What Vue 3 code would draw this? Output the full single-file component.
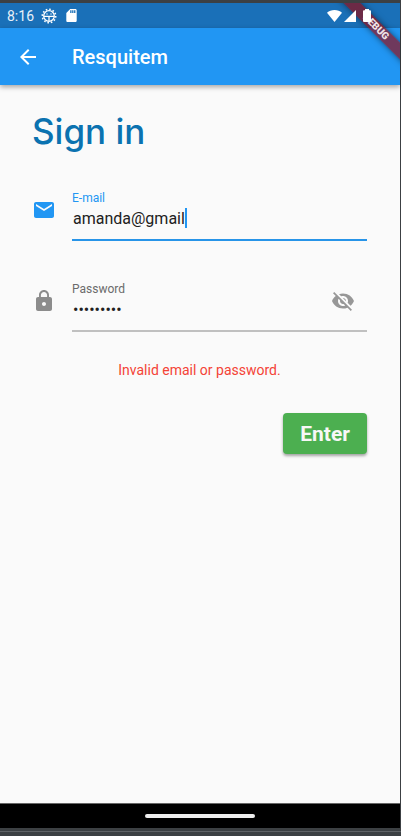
<script setup>
import { ref } from 'vue'

const email = ref('amanda@gmail')
const password = ref('password1')
const hidden = ref(true)
const error = ref('Invalid email or password.')
</script>

<template>
  <div class="device">
    <div class="screen">
      <div class="status">
        <span class="clock">8:16</span>
        <svg class="bug" viewBox="0 0 16 16" aria-hidden="true">
          <circle cx="8" cy="8" r="6.7" fill="none" stroke="#fff" stroke-width="1.6" stroke-dasharray="1.6 1.908" />
          <circle cx="8" cy="8" r="5.3" fill="none" stroke="#fff" stroke-width="1.3" />
          <path d="M3 8.300h10M8 8.300V13" stroke="#fff" stroke-width="1.3" />
          <circle cx="6" cy="6" r=".7" fill="#fff" />
          <circle cx="10" cy="6" r=".7" fill="#fff" />
        </svg>
        <svg class="sd" viewBox="4 2 16 20" aria-hidden="true">
          <path fill="#fff" d="M18 2h-8L4.020 8 4 20c0 1.100.9 2 2 2h12c1.100 0 2-.9 2-2V4c0-1.100-.9-2-2-2zm-6 6h-2V4h2v4zm3 0h-2V4h2v4zm3 0h-2V4h2v4z" />
        </svg>
        <span class="fill"></span>
        <svg class="wifi" viewBox="0 0 15 12" aria-hidden="true">
          <path fill="#fff" d="M7.500 12L0 2.700C2 1 4.600 0 7.500 0S13 1 15 2.700z" />
        </svg>
        <svg class="cell" viewBox="0 0 12 12" aria-hidden="true">
          <path fill="#fff" d="M0 12L12 0v12z" />
        </svg>
        <svg class="battery" viewBox="0 0 8 13" aria-hidden="true">
          <path fill="#fff" d="M2 0h4v1.300h1q1 0 1 1V12q0 1-1 1H1q-1 0-1-1V2.300q0-1 1-1h1z" />
        </svg>
      </div>

      <header class="appbar">
        <button class="back" type="button" aria-label="Back">
          <svg viewBox="0 0 24 24"><path fill="#fff" d="M20 11H7.830l5.590-5.590L12 4l-8 8 8 8 1.410-1.410L7.830 13H20v-2z" /></svg>
        </button>
        <h1 class="title">Resquitem</h1>
      </header>

      <div class="banner-clip"><div class="banner">DEBUG</div></div>

      <main class="content">
        <h2 class="heading">Sign in</h2>
        <form @submit.prevent>
          <div class="row">
            <svg class="icon mail" viewBox="0 0 24 24" aria-hidden="true">
              <path fill="currentColor" d="M20 4H4c-1.100 0-1.990.9-1.990 2L2 18c0 1.100.9 2 2 2h16c1.100 0 2-.9 2-2V6c0-1.100-.9-2-2-2zm0 4l-8 5-8-5V6l8 5 8-5v2z" />
            </svg>
            <div class="field active">
              <label for="email">E-mail</label>
              <div class="value">
                <span class="sizer">
                  <span class="ghost" aria-hidden="true">{{ email }}</span>
                  <input id="email" v-model="email" type="text" inputmode="email" autocomplete="off" spellcheck="false" size="1" />
                </span>
                <span class="caret"></span>
              </div>
            </div>
          </div>

          <div class="row">
            <svg class="icon" viewBox="0 0 24 24" aria-hidden="true">
              <path fill="currentColor" d="M18 8h-1V6c0-2.760-2.240-5-5-5S7 3.240 7 6v2H6c-1.100 0-2 .9-2 2v10c0 1.100.9 2 2 2h12c1.100 0 2-.9 2-2V10c0-1.100-.9-2-2-2zm-6 9c-1.100 0-2-.9-2-2s.9-2 2-2 2 .9 2 2-.9 2-2 2zm3.100-9H8.900V6c0-1.710 1.390-3.100 3.100-3.100 1.710 0 3.100 1.390 3.100 3.100v2z" />
            </svg>
            <div class="field secret">
              <div class="stack">
                <label for="password">Password</label>
                <div class="value">
                  <input id="password" v-model="password" :type="hidden ? 'password' : 'text'" autocomplete="off" />
                </div>
              </div>
              <button class="eye" type="button" aria-label="Toggle password visibility" @click="hidden = !hidden">
                <svg viewBox="0 0 24 24"><path fill="currentColor" d="M12 7c2.760 0 5 2.240 5 5 0 .65-.13 1.260-.36 1.830l2.920 2.920c1.510-1.260 2.700-2.890 3.430-4.750-1.730-4.390-6-7.500-11-7.500-1.400 0-2.740.25-3.980.7l2.160 2.160C10.740 7.130 11.350 7 12 7zM2 4.270l2.280 2.280.46.46C3.080 8.300 1.780 10.020 1 12c1.730 4.390 6 7.500 11 7.500 1.550 0 3.030-.3 4.380-.84l.42.42L19.730 22 21 20.730 3.270 3 2 4.270zM7.530 9.800l1.550 1.550c-.05.21-.08.43-.08.65 0 1.660 1.340 3 3 3 .22 0 .44-.03.65-.08l1.550 1.550c-.67.33-1.410.53-2.200.53-2.760 0-5-2.240-5-5 0-.79.2-1.530.53-2.200zm4.310-.78l3.150 3.150.02-.16c0-1.660-1.340-3-3-3l-.17.01z" /></svg>
              </button>
            </div>
          </div>

          <p class="error" role="alert">{{ error }}</p>
          <div class="actions"><button class="enter" type="submit">Enter</button></div>
        </form>
      </main>

      <div class="navbar"><span class="pill"></span></div>
    </div>
  </div>
</template>

<style>
body { margin: 0; background: #3c4043; }
</style>

<style scoped>
* { box-sizing: border-box; }
.device {
  min-height: 100vh;
  display: flex;
  flex-direction: column;
  padding: 3px 1px 8px 0;
  background: linear-gradient(#3c4043, #3c4043) top / 100% 50% no-repeat, linear-gradient(to top, #3c4043 4px, #5f6366 4px, #5f6366 5px, #3c4043 5px);
  font-family: Roboto, "Liberation Sans", sans-serif;
}
.screen {
  position: relative;
  flex: 1;
  display: flex;
  flex-direction: column;
  background: #fafafa;
}
.status {
  display: flex;
  align-items: center;
  height: 25px;
  padding: 0 29px 0 7px;
  background: #1a70b8;
  color: #e8f1f8;
}
.status svg { flex: none; position: relative; z-index: 2; }
.clock { font-size: 14px; }
.bug { width: 16px; height: 16px; margin-left: 7px; }
.sd { width: 11px; height: 13px; margin-left: 9px; }
.fill { flex: 1; }
.wifi { width: 15px; height: 12px; }
.cell { width: 12px; height: 12px; margin-left: 2px; }
.battery { width: 8px; height: 13px; margin-left: 7px; }
.appbar {
  display: flex;
  align-items: center;
  height: 57px;
  padding-left: 16px;
  background: #2196f3;
  box-shadow: 0 2px 5px rgba(0, 0, 0, 0.35);
}
button { border: 0; font-family: inherit; cursor: pointer; }
.back { width: 24px; height: 24px; padding: 0; background: none; }
.back svg, .eye svg { display: block; width: 24px; height: 24px; }
.title { margin: 0 0 0 32px; color: #fff; font-size: 20px; font-weight: 500; }
.banner-clip {
  position: absolute;
  z-index: 1;
  top: 0;
  right: 0;
  width: 80px;
  height: 80px;
  overflow: hidden;
  pointer-events: none;
}
.banner {
  position: absolute;
  top: 18px;
  right: -36px;
  width: 120px;
  height: 12px;
  transform: rotate(45deg);
  background: rgba(160, 0, 0, 0.62);
  box-shadow: 0 0 6px rgba(0, 0, 0, 0.5);
  color: #f0e4e8;
  font-size: 10px;
  font-weight: 900;
  line-height: 12px;
  text-align: center;
}
.content { flex: 1; padding: 24px 33px 24px 32px; }
.heading {
  margin: 0;
  color: #0b72b0;
  font-family: Inter, "Noto Sans", sans-serif;
  font-size: 35px;
  font-weight: 500;
  line-height: 44px;
}
form { padding-top: 32px; }
.row { display: flex; gap: 16px; padding-bottom: 35px; }
.icon { flex: none; width: 24px; height: 24px; margin-top: 13px; color: #8c8c8c; }
.icon.mail { color: #2196f3; }
.field { flex: 1; min-width: 0; height: 56px; padding-top: 6px; border-bottom: 2px solid #c0c0c0; }
label { display: block; color: #6b6b6b; font-size: 12px; line-height: 14px; }
.active { border-color: #2794e8; }
.active label { color: #2196f3; }
.value { display: flex; align-items: center; height: 26px; padding-left: 1px; font-size: 16px; }
.sizer { display: grid; min-width: 0; }
.sizer > * { grid-area: 1 / 1; }
.ghost { visibility: hidden; white-space: pre; }
input {
  width: 100%;
  min-width: 0;
  padding: 0;
  border: 0;
  outline: 0;
  background: none;
  color: #212121;
  font: inherit;
}
.caret { width: 2px; height: 20px; background: #2196f3; }
.secret { display: flex; }
.stack { flex: 1; min-width: 0; }
.eye { flex: none; width: 48px; height: 48px; margin-top: -5px; padding: 12px; background: none; color: #979797; }
.error { margin: -6px 0 0; color: #f44336; font-size: 14px; line-height: 18px; text-align: center; }
.actions { display: flex; justify-content: flex-end; padding-top: 34px; }
.enter {
  height: 41px;
  padding: 0 17px;
  border-radius: 4px;
  background: #4caf50;
  box-shadow: 0 2px 3px rgba(0, 0, 0, 0.35);
  color: #f7f7f7;
  font-size: 21px;
  font-weight: 700;
}
.navbar {
  display: flex;
  align-items: center;
  justify-content: center;
  height: 25px;
  border-top: 1px solid #666;
  background: #000;
}
.pill { width: 110px; height: 4px; border-radius: 2px; background: #eee; }
</style>
